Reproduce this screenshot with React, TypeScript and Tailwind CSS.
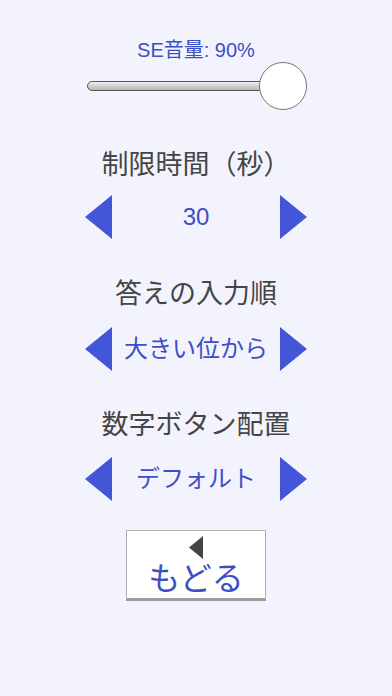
import React from 'react';

const FONT = { fontFamily: '"Liberation Sans", "Noto Sans CJK JP", sans-serif' };

function Tri({ dir, className }: { dir: 'left' | 'right'; className?: string }) {
  return (
    <svg viewBox="0 0 27 44" className={className}>
      {dir === 'left' ? (
        <polygon points="27,0 27,44 0,22" fill="#4456d8" />
      ) : (
        <polygon points="0,0 0,44 27,22" fill="#4456d8" />
      )}
    </svg>
  );
}

function Picker({ value, className }: { value: string; className?: string }) {
  return (
    <div className={`flex h-[44px] w-[222px] items-center justify-between ${className ?? ''}`}>
      <Tri dir="left" className="h-[44px] w-[27px]" />
      <span className="text-[24px] leading-[44px] text-[#3d4fc4]">{value}</span>
      <Tri dir="right" className="h-[44px] w-[27px]" />
    </div>
  );
}

function Label({ text, className }: { text: string; className?: string }) {
  return (
    <div className={`h-[36px] text-[27px] leading-[36px] text-[#454545] ${className ?? ''}`}>{text}</div>
  );
}

export default function App() {
  return (
    <div className="min-h-[696px] bg-[#f3f3fe] flex flex-col items-center pt-[38px]" style={FONT}>
      <div className="h-[24px] text-[20px] leading-[24px] text-[#3d4fc4]">SE音量: 90%</div>

      {/* slider */}
      <div className="relative mt-[0px] h-[48px] w-[220px] ml-[2px]">
        <div className="absolute left-0 right-[24px] top-[19px] h-[10px] rounded-full border border-[#555] bg-gradient-to-b from-[#f2f2f2] via-[#cfcfcf] to-[#b8b8b8]" />
        <div className="absolute right-0 top-0 h-[48px] w-[48px] rounded-full border border-[#777] bg-white" />
      </div>

      <Label text="制限時間（秒）" className="mt-[37px]" />
      <Picker value="30" className="mt-[12px]" />

      <Label text="答えの入力順" className="mt-[37px]" />
      <Picker value="大きい位から" className="mt-[15px]" />

      <Label text="数字ボタン配置" className="mt-[36px]" />
      <Picker value="デフォルト" className="mt-[14px]" />

      <button className="mt-[29px] flex h-[71px] w-[140px] flex-col items-center border border-[#b0b0b0] border-b-[3px] border-b-[#9c9c9c] bg-white pt-[5px]">
        <svg viewBox="0 0 14 23" className="h-[23px] w-[14px]">
          <polygon points="14,0 14,23 0,11.5" fill="#444" />
        </svg>
        <span className="mt-[1px] text-[32px] leading-[38px] text-[#3d4fc4]">もどる</span>
      </button>
    </div>
  );
}
